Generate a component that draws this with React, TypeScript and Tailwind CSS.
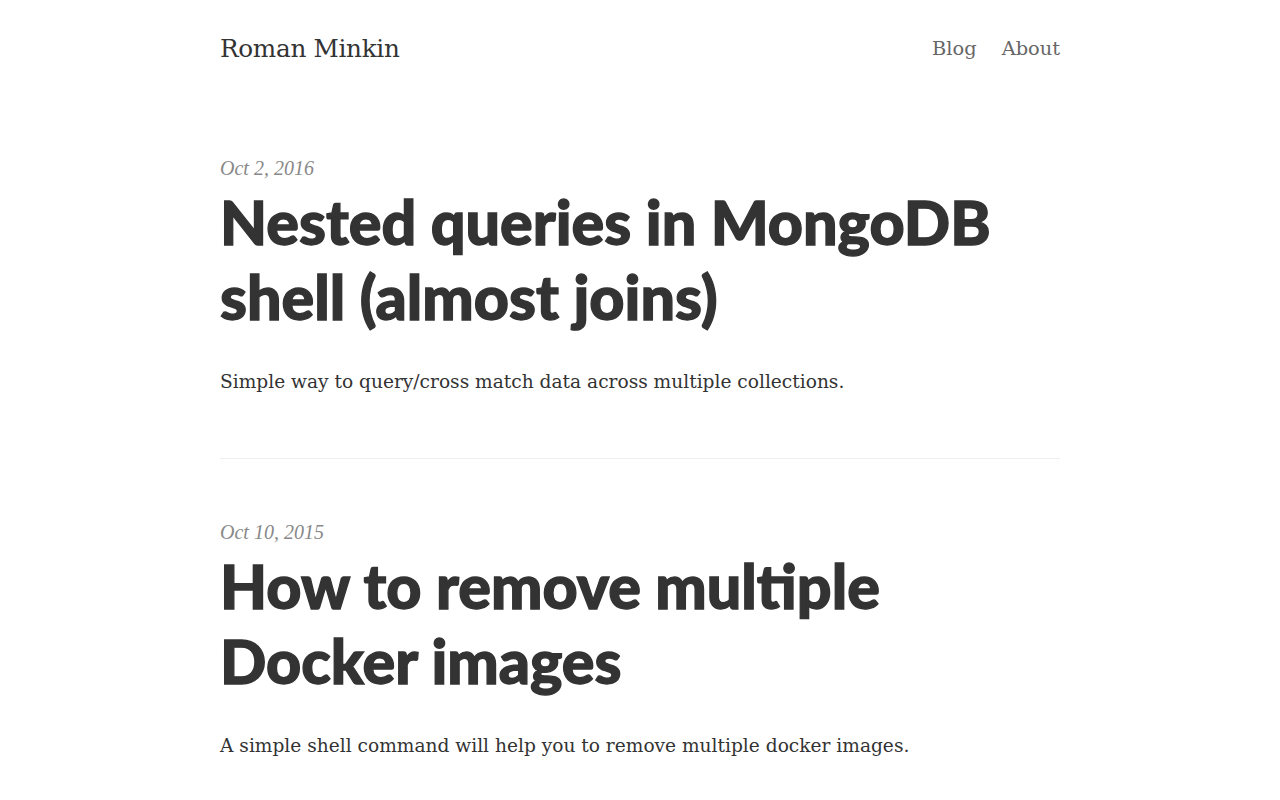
const serif = "font-['DejaVu_Serif','Liberation_Serif',serif]";
const sans = "font-['Lato','Liberation_Sans',sans-serif]";

const posts = [
  {
    date: "Oct 2, 2016",
    title: "Nested queries in MongoDB shell (almost joins)",
    excerpt: "Simple way to query/cross match data across multiple collections.",
  },
  {
    date: "Oct 10, 2015",
    title: "How to remove multiple Docker images",
    excerpt: "A simple shell command will help you to remove multiple docker images.",
  },
];

export default function App() {
  return (
    <div className={`min-h-screen bg-white text-[#333] ${serif}`}>
      <div className="mx-auto w-[840px]">
        <header className="flex items-start justify-between pt-[30px]">
          <a className="text-[24.7px] font-light tracking-[-0.3px] text-[#333]">Roman Minkin</a>
          <nav className="flex gap-[25px] pt-[4px] text-[19.4px] font-light text-[#666]">
            <a>Blog</a>
            <a>About</a>
          </nav>
        </header>

        <main className="pt-[86px]">
          {posts.map((p, i) => (
            <article key={p.date}>
              {i > 0 && <hr className="mb-[58px] border-t border-[#eee]" />}
              <div className="font-['Liberation_Serif',serif] text-[20px] italic text-[#888]">{p.date}</div>
              <h2
                className={`${sans} mt-[1px] text-[61px] font-black leading-[75px] text-[#333] [-webkit-text-stroke:1.3px_#333]`}
              >
                {p.title}
              </h2>
              <p className="mt-[34px] mb-[62px] text-[18.6px] font-light text-[#333]">{p.excerpt}</p>
            </article>
          ))}
        </main>
      </div>
    </div>
  );
}
